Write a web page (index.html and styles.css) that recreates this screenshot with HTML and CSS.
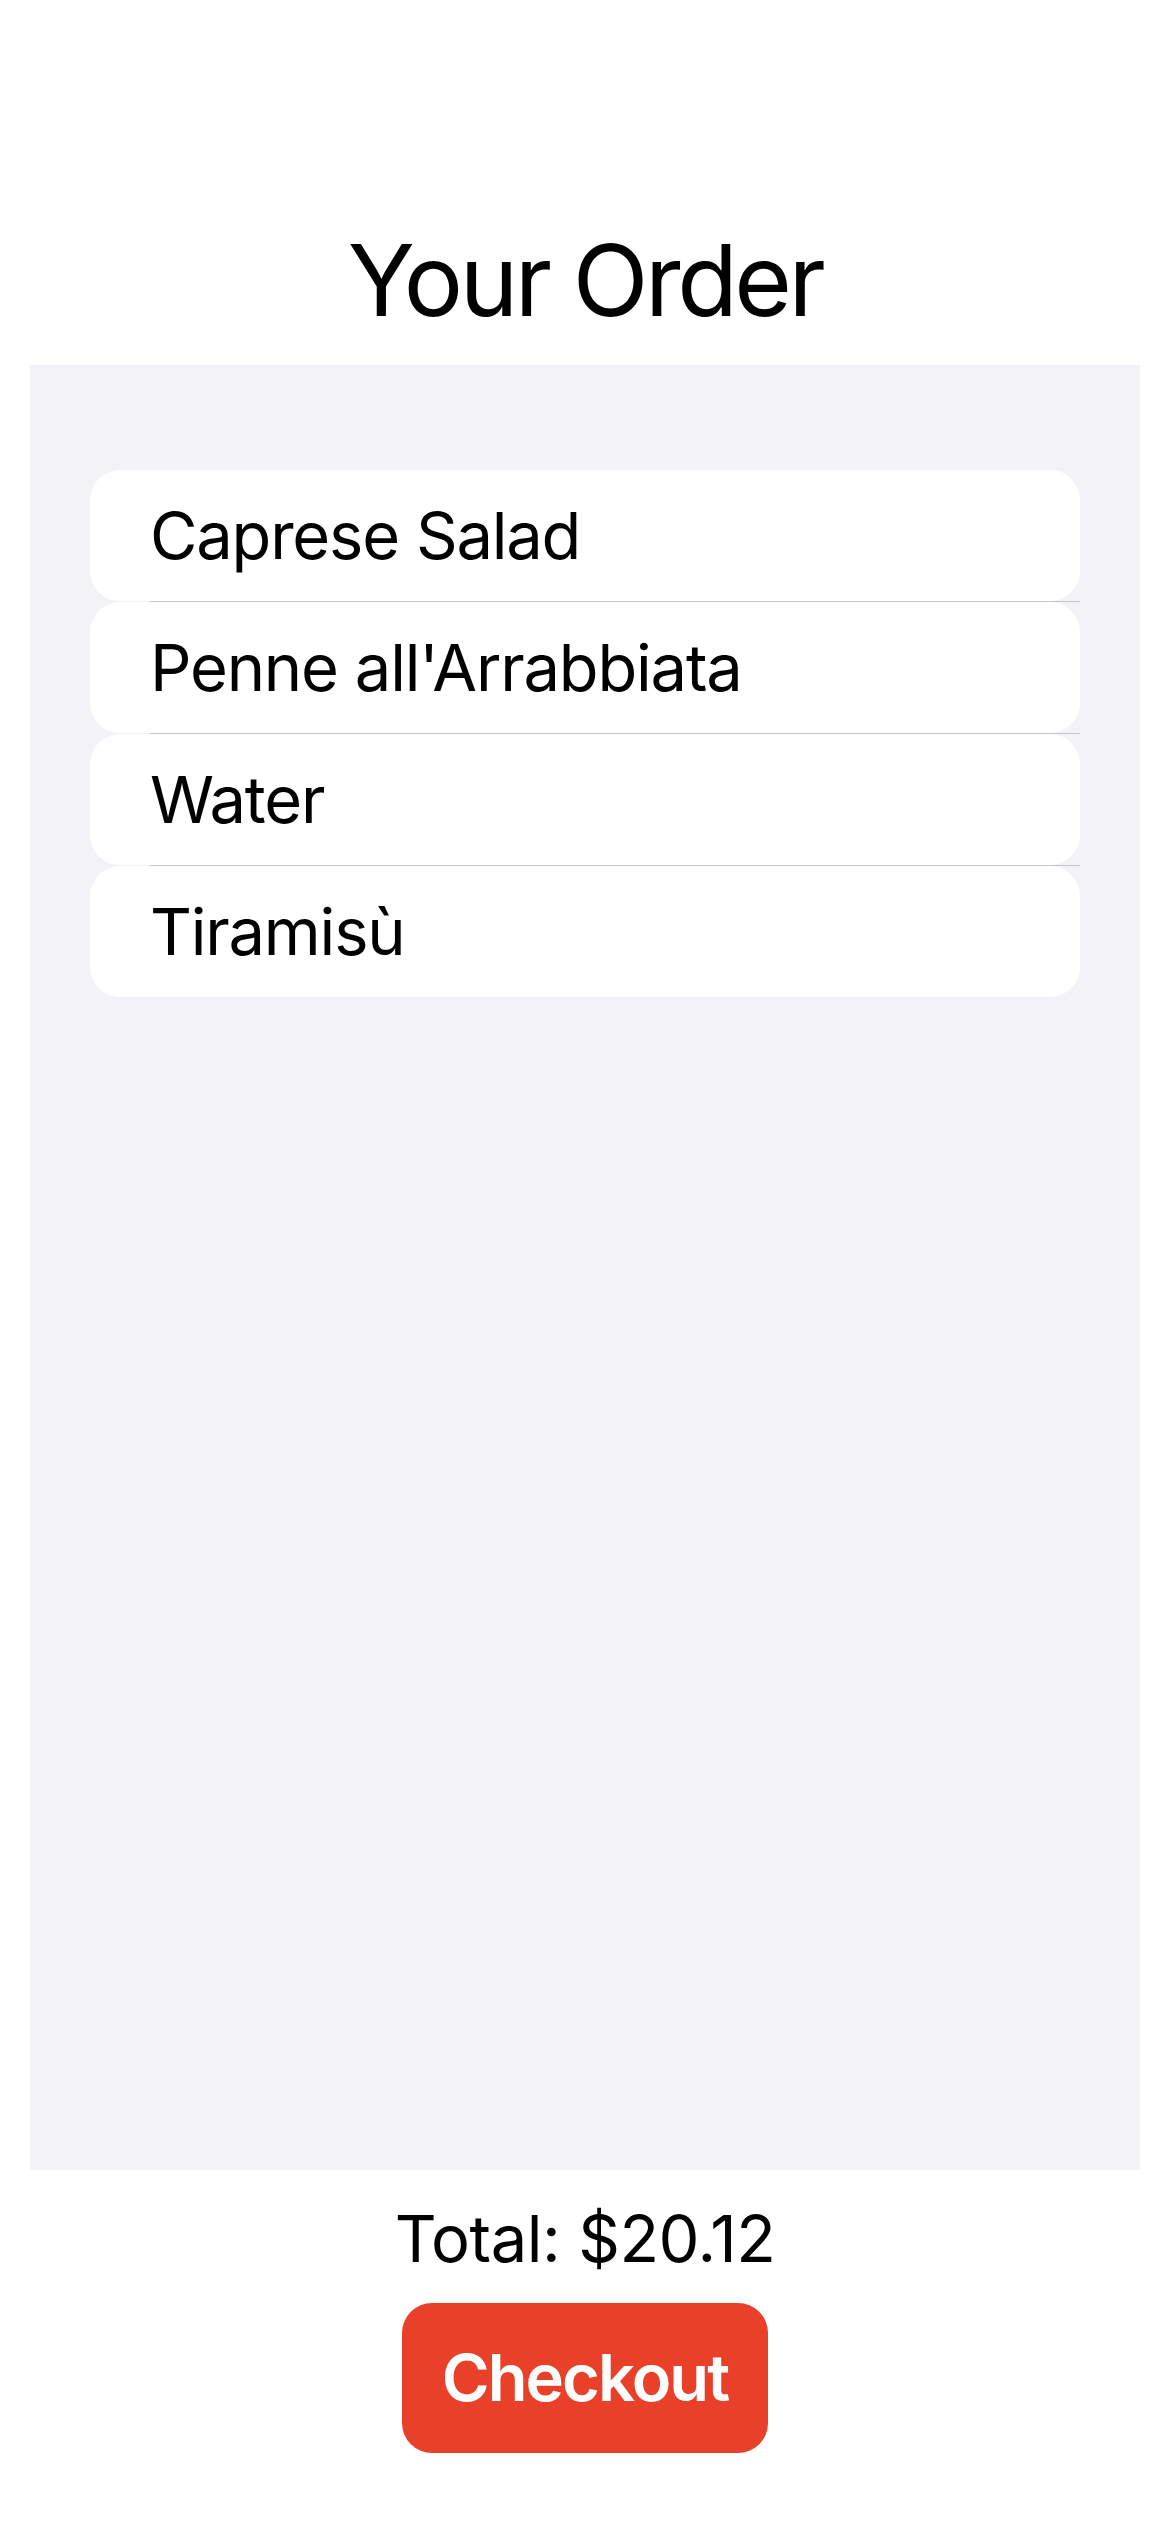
FILE: index.html
```html
<!DOCTYPE html>
<html lang="en">
<head>
<meta charset="utf-8">
<title>Your Order</title>
<link rel="stylesheet" href="styles.css">
</head>
<body>
<div class="app">
  <header class="header">
    <h1 class="title">Your Order</h1>
  </header>
  <main class="list-area">
    <div class="list">
      <div class="row"><span class="row-text">Caprese Salad</span></div>
      <div class="sep"></div>
      <div class="row"><span class="row-text">Penne all'Arrabbiata</span></div>
      <div class="sep"></div>
      <div class="row"><span class="row-text">Water</span></div>
      <div class="sep"></div>
      <div class="row"><span class="row-text">Tiramisù</span></div>
    </div>
  </main>
  <footer class="footer">
    <div class="total">Total: $20.12</div>
    <button class="checkout" type="button">Checkout</button>
  </footer>
</div>
</body>
</html>
```
FILE: styles.css
```css
html, body {
  margin: 0;
  padding: 0;
  background: #ffffff;
}
body {
  font-family: Inter, "Noto Sans", "Liberation Sans", sans-serif;
  color: #000000;
  width: 1170px;
  height: 2532px;
  overflow: hidden;
}
.app {
  display: flex;
  flex-direction: column;
  height: 2532px;
}
.header {
  box-sizing: border-box;
  height: 365px;
  padding-top: 220px;
}
.title {
  margin: 0;
  font-size: 99px;
  font-weight: 400;
  line-height: 120px;
  text-align: center;
  letter-spacing: -3.5px;
}
.list-area {
  box-sizing: border-box;
  height: 1805px;
  margin: 0 30px;
  background: #f2f2f7;
  padding: 105px 60px 0;
}
.list {
  display: flex;
  flex-direction: column;
}
.row {
  height: 131px;
  background: #ffffff;
  border-radius: 30px;
  display: flex;
  align-items: center;
  padding-left: 60px;
}
.row-text {
  font-size: 65px;
  line-height: 80px;
  letter-spacing: -1.2px;
}
.sep {
  height: 1px;
  margin-left: 60px;
  background: #c6c6c8;
}
.footer {
  display: flex;
  flex-direction: column;
  align-items: center;
  padding-top: 29px;
  gap: 24px;
}
.total {
  font-size: 65px;
  line-height: 80px;
  letter-spacing: -0.45px;
}
.checkout {
  font-family: Inter, "Noto Sans", "Liberation Sans", sans-serif;
  font-size: 65px;
  font-weight: 600;
  line-height: 80px;
  color: #ffffff;
  background: #e94129;
  border: none;
  border-radius: 30px;
  padding: 35px 40px;
  letter-spacing: -1.9px;
}
```
